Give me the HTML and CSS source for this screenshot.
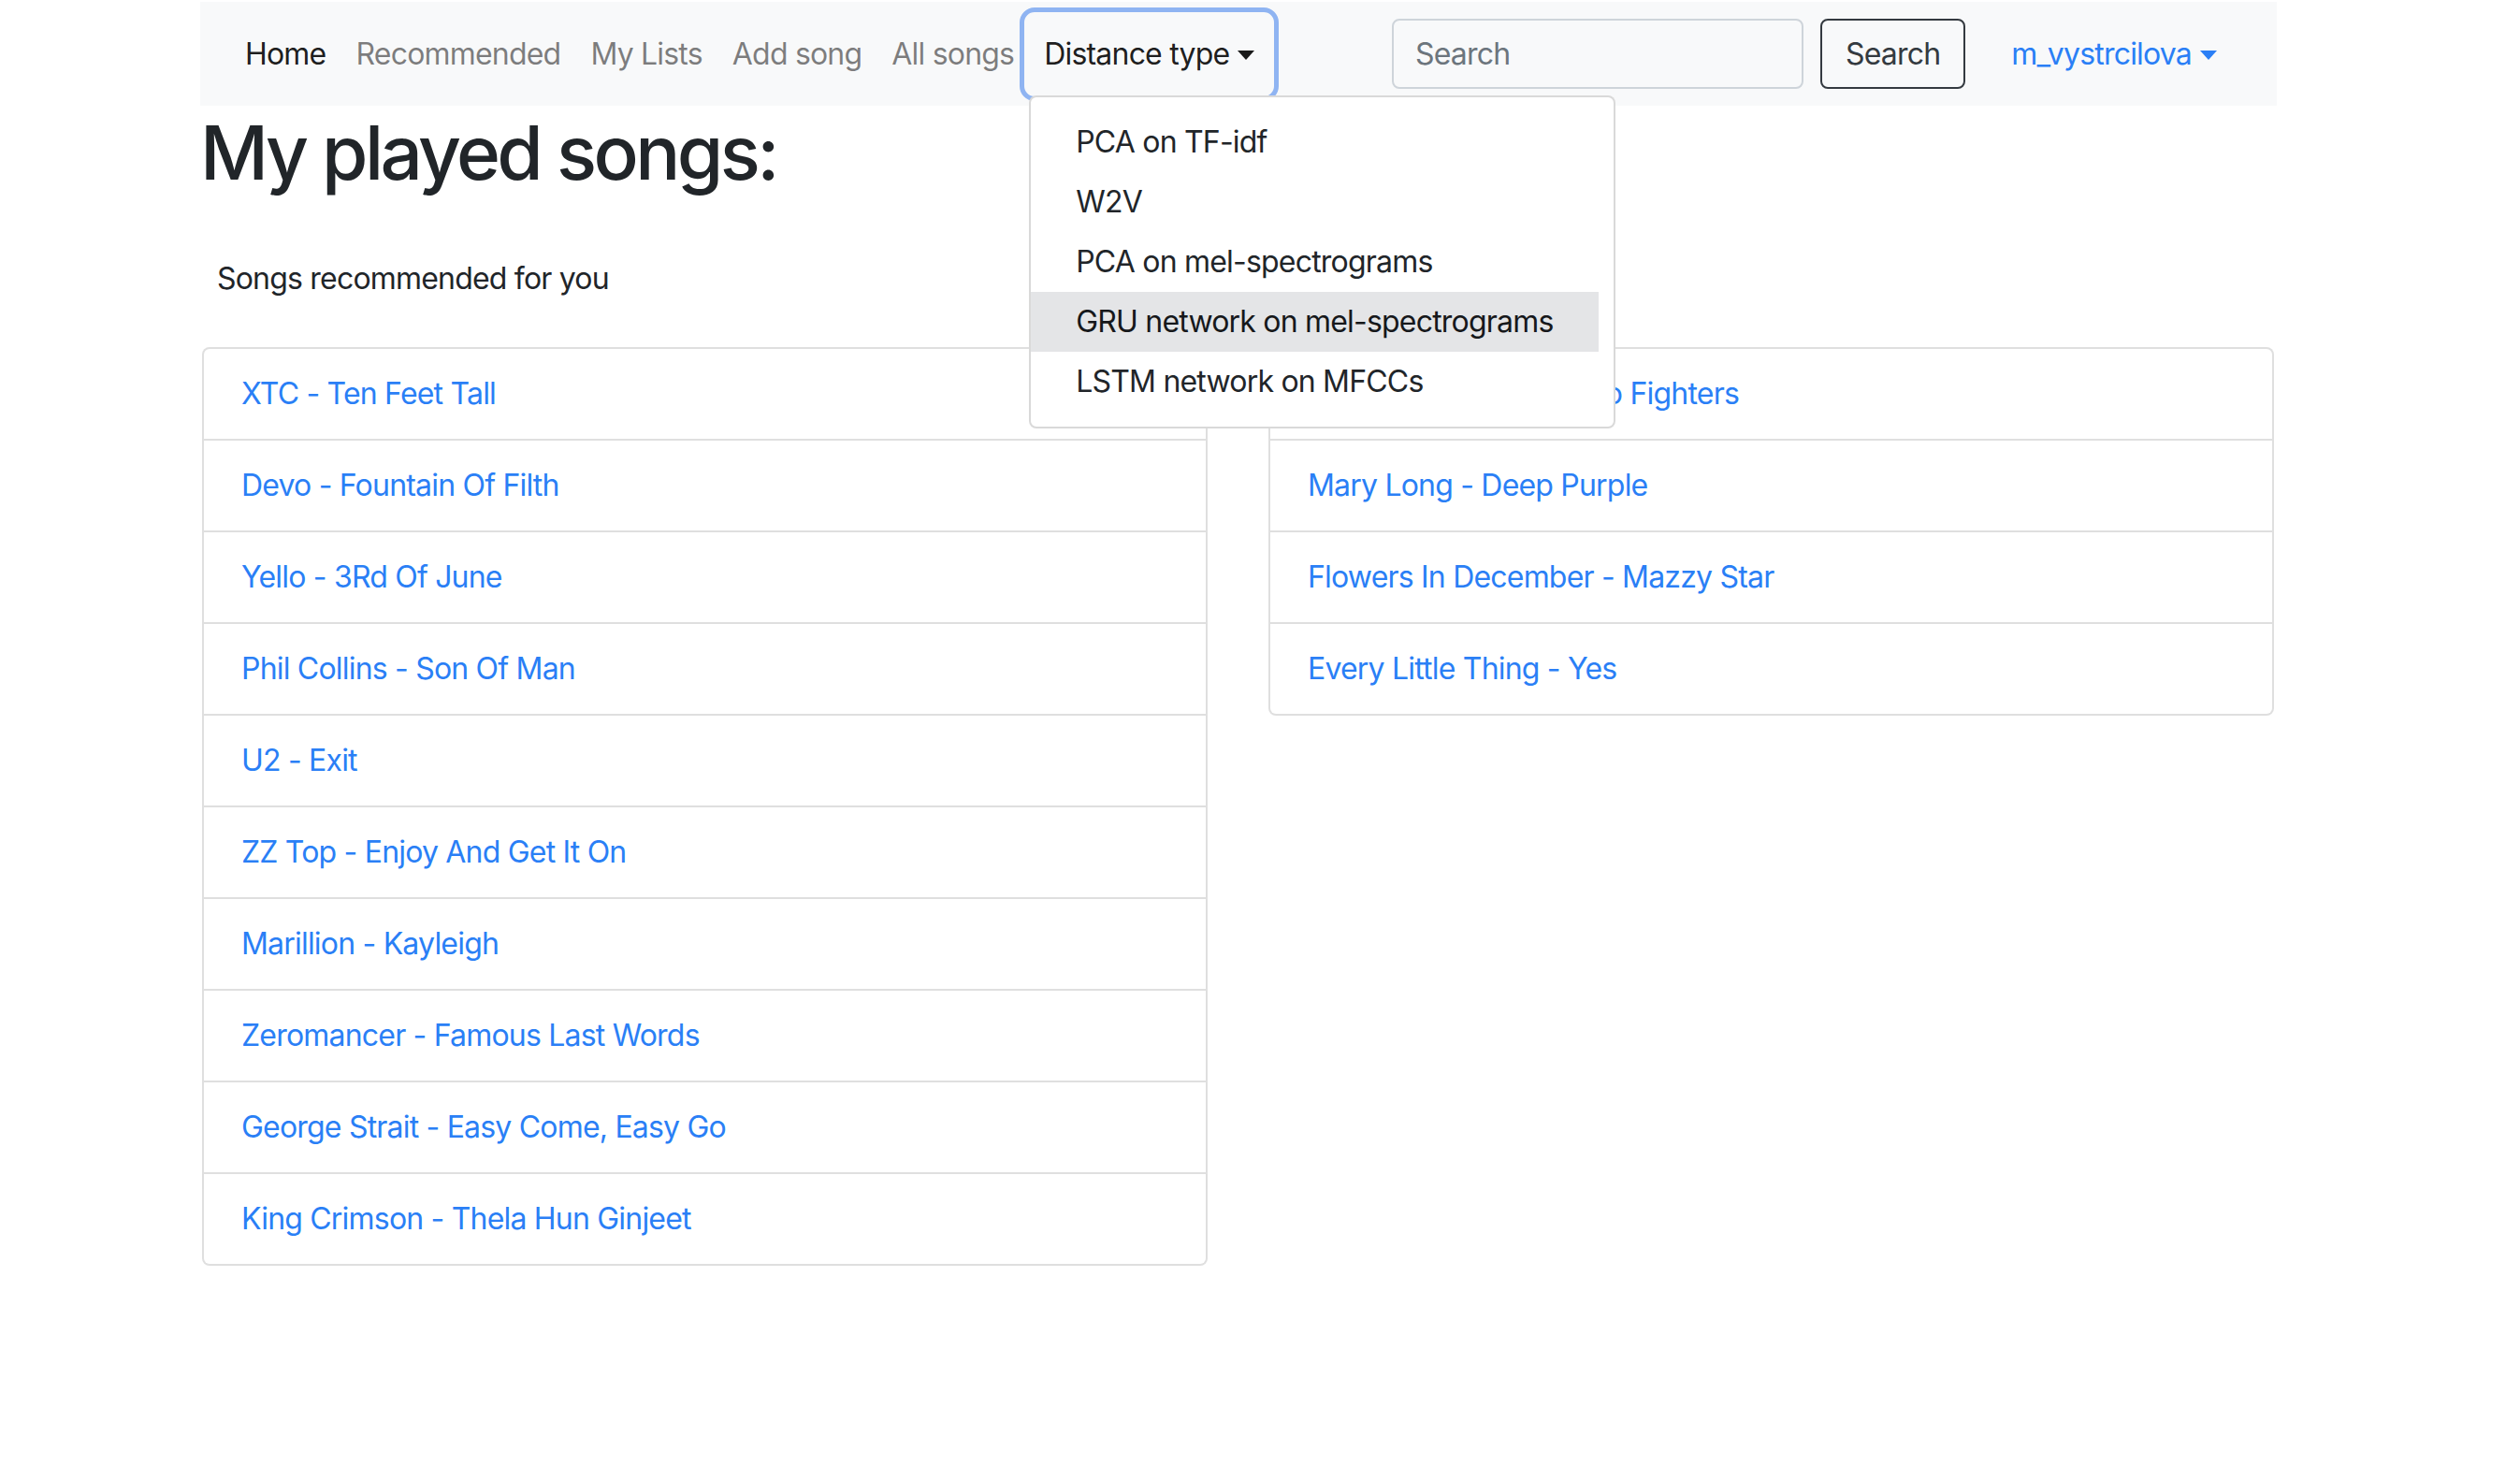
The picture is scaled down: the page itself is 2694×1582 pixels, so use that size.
FILE: index.html
```html
<!DOCTYPE html>
<html lang="en">
<head>
<meta charset="utf-8">
<title>My played songs</title>
<link rel="stylesheet" href="styles.css">
</head>
<body>
<div class="container">
  <nav class="navbar">
    <ul class="nav">
      <li><a class="nav-link active" href="#">Home</a></li>
      <li><a class="nav-link" href="#">Recommended</a></li>
      <li><a class="nav-link" href="#">My Lists</a></li>
      <li><a class="nav-link" href="#">Add song</a></li>
      <li><a class="nav-link" href="#">All songs</a></li>
      <li class="dropdown">
        <a class="nav-link toggle focused" href="#">Distance type<span class="caret"></span></a>
        <div class="dropdown-menu">
          <a class="dropdown-item" href="#">PCA on TF-idf</a>
          <a class="dropdown-item" href="#">W2V</a>
          <a class="dropdown-item" href="#">PCA on mel-spectrograms</a>
          <a class="dropdown-item hover" href="#">GRU network on mel-spectrograms</a>
          <a class="dropdown-item" href="#">LSTM network on MFCCs</a>
        </div>
      </li>
    </ul>
    <form class="search-form">
      <input class="search-input" type="text" placeholder="Search">
      <button class="search-btn" type="button">Search</button>
    </form>
    <a class="nav-link user" href="#">m_vystrcilova<span class="caret"></span></a>
  </nav>

  <h1 class="title">My played songs:</h1>
  <p class="subtitle">Songs recommended for you</p>

  <div class="lists">
    <ul class="list-group">
      <li class="list-item"><a href="#">XTC - Ten Feet Tall</a></li>
      <li class="list-item"><a href="#">Devo - Fountain Of Filth</a></li>
      <li class="list-item"><a href="#">Yello - 3Rd Of June</a></li>
      <li class="list-item"><a href="#">Phil Collins - Son Of Man</a></li>
      <li class="list-item"><a href="#">U2 - Exit</a></li>
      <li class="list-item"><a href="#">ZZ Top - Enjoy And Get It On</a></li>
      <li class="list-item"><a href="#">Marillion - Kayleigh</a></li>
      <li class="list-item"><a href="#">Zeromancer - Famous Last Words</a></li>
      <li class="list-item"><a href="#">George Strait - Easy Come, Easy Go</a></li>
      <li class="list-item"><a href="#">King Crimson - Thela Hun Ginjeet</a></li>
    </ul>
    <ul class="list-group">
      <li class="list-item"><a href="#">Times Like These - Foo Fighters</a></li>
      <li class="list-item"><a href="#">Mary Long - Deep Purple</a></li>
      <li class="list-item"><a href="#">Flowers In December - Mazzy Star</a></li>
      <li class="list-item"><a href="#">Every Little Thing - Yes</a></li>
    </ul>
  </div>
</div>
</body>
</html>
```
FILE: styles.css
```css
* { box-sizing: border-box; }

html, body {
  margin: 0;
  padding: 0;
  background: #ffffff;
}

body {
  font-family: Inter, "Liberation Sans", sans-serif;
  font-size: 32px;
  line-height: 48px;
  letter-spacing: -0.8px;
  color: #212529;
}

a { text-decoration: none; }

.container {
  width: 2220px;
  margin-left: 214px;
}

/* NAVBAR */
.navbar {
  margin-top: 2px;
  height: 111px;
  padding: 0 32px;
  background: #f8f9fa;
  display: flex;
  align-items: center;
}

.nav {
  list-style: none;
  margin: 0;
  padding: 0;
  display: flex;
  align-items: center;
}

.nav-link {
  display: flex;
  align-items: center;
  padding: 16px 16px;
  line-height: 48px;
  color: rgba(0, 0, 0, 0.5);
  white-space: nowrap;
}

.nav-link.active { color: rgba(0, 0, 0, 0.9); }

.toggle { color: rgba(0, 0, 0, 0.9); }

.focused {
  border-radius: 6px;
  outline: 5px solid #8fb4f2;
  outline-offset: 5px;
}

.caret {
  display: inline-block;
  margin-left: 9px;
  width: 0;
  height: 0;
  border-top: 10px solid currentColor;
  border-left: 9px solid transparent;
  border-right: 9px solid transparent;
  position: relative;
  top: 1px;
}

.dropdown { position: relative; }

.dropdown-menu {
  position: absolute;
  top: 100%;
  left: 0;
  margin-top: 4px;
  z-index: 10;
  background: #ffffff;
  border: 2px solid rgba(0, 0, 0, 0.15);
  border-radius: 8px;
  padding: 16px 16px 16px 0;
  display: flex;
  flex-direction: column;
}

.dropdown-item {
  display: block;
  padding: 8px 48px;
  line-height: 48px;
  color: #212529;
  white-space: nowrap;
}

.dropdown-item.hover {
  background: #e4e5e7;
  color: #16181b;
}

.search-form {
  margin-left: auto;
  display: flex;
  align-items: center;
}

.search-input {
  width: 440px;
  height: 75px;
  padding: 0 23px;
  font-family: inherit;
  font-size: 32px;
  letter-spacing: -0.8px;
  color: #495057;
  background: #f8f9fa;
  border: 2px solid #ced4da;
  border-radius: 8px;
  outline: none;
}

.search-input::placeholder { color: #6c757d; }

.search-btn {
  margin-left: 18px;
  height: 75px;
  padding: 0 25px;
  font-family: inherit;
  font-size: 32px;
  letter-spacing: -0.8px;
  color: #343a40;
  background: transparent;
  border: 2px solid #343a40;
  border-radius: 8px;
}

.user {
  margin-left: 33px;
  margin-right: 16px;
  color: #2a7ff6;
}

/* CONTENT */
.title {
  margin: 2px 0 0;
  font-size: 80px;
  line-height: 96px;
  font-weight: 500;
  letter-spacing: -3.6px;
  color: #212529;
}

.subtitle {
  margin: 63px 0 49px;
  padding-left: 18px;
}

.lists {
  display: grid;
  grid-template-columns: 1fr 1fr;
  column-gap: 60px;
  align-items: start;
}

.list-group {
  list-style: none;
  margin: 0 3px 0 2px;
  padding: 0;
}

.list-item {
  padding: 24px 40px;
  border: 2px solid rgba(0, 0, 0, 0.125);
  border-top-width: 0;
  background: #ffffff;
}

.list-item:first-child {
  border-top-width: 2px;
  border-radius: 8px 8px 0 0;
}

.list-item:last-child { border-radius: 0 0 8px 8px; }

.list-item a { color: #2a7ff6; }
```
